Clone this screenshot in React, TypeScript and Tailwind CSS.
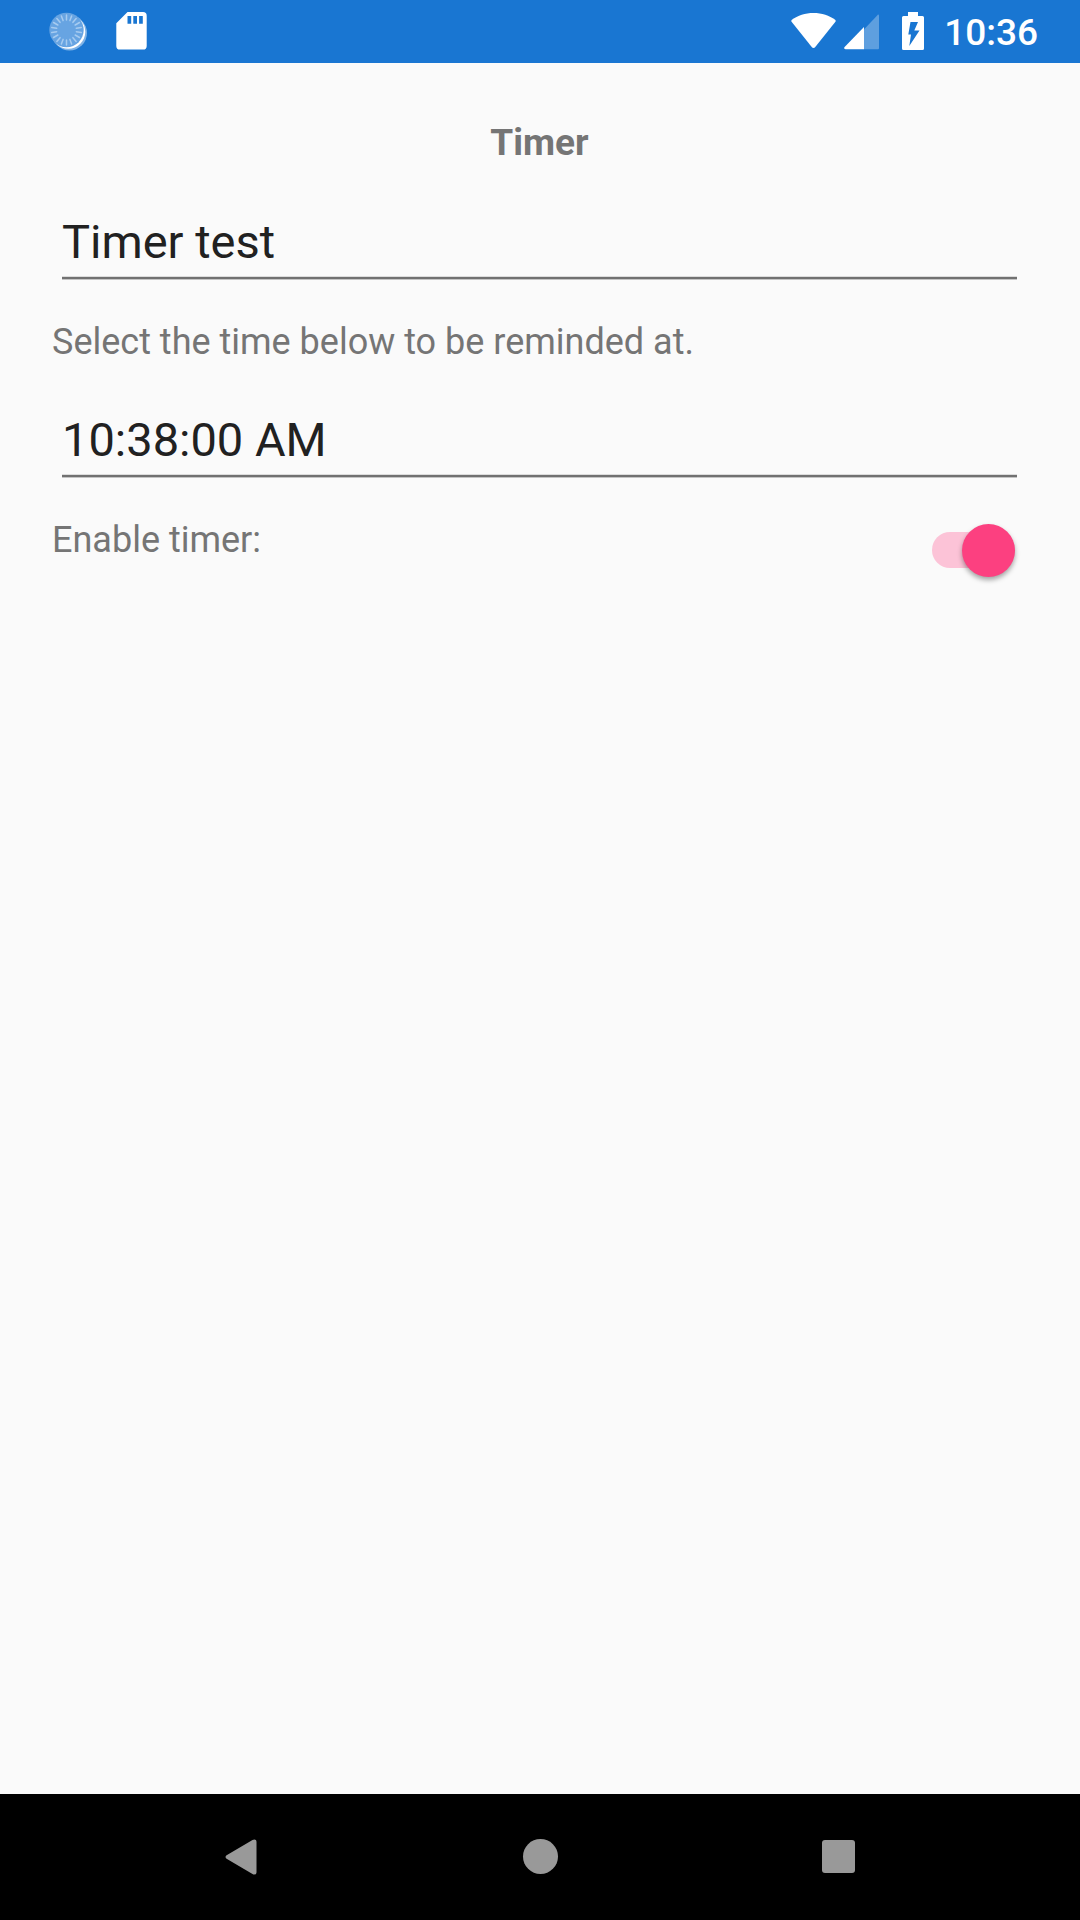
import { useState } from 'react';

const TICKS = Array.from({ length: 18 }, (_, i) => (i * 360) / 18);

function SyncIcon() {
  return (
    <svg className="h-10 w-10" viewBox="0 0 40 40" aria-hidden="true">
      <circle cx="21.5" cy="22" r="17.5" fill="#fff" opacity="0.45" />
      <circle cx="20.3" cy="20.8" r="17" fill="#fff" />
      <circle cx="18.5" cy="19" r="17.2" fill="#67a4e2" />
      <g stroke="#a6cbf0" strokeWidth="1.5" strokeLinecap="round">
        {TICKS.map((angle) => (
          <path key={angle} d="M18.5 4v5" transform={`rotate(${angle} 18.5 19)`} />
        ))}
      </g>
    </svg>
  );
}

function SdCardIcon() {
  return (
    <svg className="h-[38px] w-[31px]" viewBox="0 0 31 38" aria-hidden="true">
      <path
        fill="#fff"
        fillRule="evenodd"
        d="M11.5 0H27a3.7 3.7 0 0 1 3.7 3.7v30.2a3.7 3.7 0 0 1-3.7 3.7H4A3.7 3.7 0 0 1 .3 33.9V11.300zM11.500 4v7.700h3.700V4zM17.300 4v7.700h3.700V4zM23.100 4v7.700h3.700V4z"
      />
    </svg>
  );
}

function WifiIcon() {
  return (
    <svg className="h-9 w-[45px]" viewBox="0 0 46 37" preserveAspectRatio="none" aria-hidden="true">
      <path
        fill="#fff"
        d="M23 0C14.500 0 6.800 2.600.9 7c-.7.600-.8 1.400-.3 2.100L21.400 35.200c.8 1 2.400 1 3.200 0L45.400 9.100c.5-.7.4-1.500-.3-2.100C39.200 2.600 31.500 0 23 0z"
      />
    </svg>
  );
}

function SignalIcon() {
  return (
    <svg className="h-9 w-9" viewBox="0 0 36 36" aria-hidden="true">
      <path fill="#fff" opacity="0.3" d="M20 15.500 33.600.9c.6-.6 1.400-.2 1.400.600V34c0 .8-.5 1.300-1.300 1.300H20z" />
      <path fill="#fff" d="M20 13v22.300H1.500C.2 35.300-.3 34 .6 33z" />
    </svg>
  );
}

function BatteryIcon() {
  return (
    <svg className="h-[38px] w-[22px]" viewBox="0 0 22 38" aria-hidden="true">
      <path
        fill="#fff"
        fillRule="evenodd"
        d="M6 0h10v4h4.500A1.500 1.500 0 0 1 22 5.500v31a1.500 1.500 0 0 1-1.500 1.500h-19A1.500 1.500 0 0 1 0 36.500v-31A1.500 1.500 0 0 1 1.500 4H6zM8.500 10 6.300 22.500H9L7.300 34 17.500 18.500H12.300L16 10z"
      />
    </svg>
  );
}

function StatusBar() {
  return (
    <header className="flex h-[63px] items-center bg-[#1976d2] pr-[42px] pb-px pl-12 text-white">
      <SyncIcon />
      <div className="ml-7">
        <SdCardIcon />
      </div>
      <div className="ml-auto flex items-center">
        <WifiIcon />
        <div className="ml-2 pt-0.5">
          <SignalIcon />
        </div>
        <div className="ml-[22px]">
          <BatteryIcon />
        </div>
        <time className="ml-5 pt-1 text-[37px] leading-[44px] font-medium">10:36</time>
      </div>
    </header>
  );
}

const FIELD =
  'mx-2.5 h-[65px] border-b-2 border-[#717171] bg-transparent pb-[9px] text-[47px] leading-[54px] text-[#212121] shadow-[inset_0_-1px_0_#dcdcdc,0_1px_0_#c4c4c4] outline-none';

export default function App() {
  const [name, setName] = useState('Timer test');
  const [time, setTime] = useState('10:38:00 AM');
  const [enabled, setEnabled] = useState(true);

  return (
    <div className="flex min-h-screen flex-col bg-[#fafafa] font-[Roboto,sans-serif]">
      <StatusBar />
      <main className="flex flex-1 flex-col pt-[58px] pr-[53px] pl-[52px] text-[36px] leading-[44px] text-[#757575]">
        <h1 className="mb-[49px] text-center text-[37px] leading-[44px] font-bold">Timer</h1>
        <input
          type="text"
          aria-label="Timer name"
          className={FIELD}
          value={name}
          onChange={(e) => setName(e.target.value)}
        />
        <label htmlFor="time" className="mt-[41px] mb-12">
          Select the time below to be reminded at.
        </label>
        <input
          id="time"
          type="text"
          className={FIELD}
          value={time}
          onChange={(e) => setTime(e.target.value)}
        />
        <div className="mt-[41px] flex items-start justify-between">
          <label htmlFor="enabled">Enable timer:</label>
          <input
            id="enabled"
            type="checkbox"
            role="switch"
            checked={enabled}
            onChange={(e) => setEnabled(e.target.checked)}
            className="mt-[14px] mr-3 flex h-9 w-[83px] appearance-none items-center rounded-full bg-[#bdbdbd] before:size-[53px] before:shrink-0 before:rounded-full before:bg-[#f5f5f5] before:shadow-[0_3px_5px_rgba(0,0,0,0.35)] checked:justify-end checked:bg-[#fcc3d7] checked:before:bg-[#fc4080]"
          />
        </div>
      </main>
      <nav className="flex h-[126px] bg-black px-[92px] pb-px">
        <button type="button" aria-label="Back" className="flex flex-1 items-center justify-center">
          <svg className="h-9 w-8" viewBox="0 0 32 36" aria-hidden="true">
            <path
              fill="#999"
              d="M1.600 16.200 27.500.9C29.500-.2 31.500.500 31.500 2.800v30.400c0 2.300-2 3-4 1.900L1.600 19.800c-1.400-.9-1.400-2.700 0-3.600z"
            />
          </svg>
        </button>
        <button type="button" aria-label="Home" className="flex flex-1 items-center justify-center">
          <span className="size-[35px] rounded-full bg-[#999]" />
        </button>
        <button type="button" aria-label="Recent apps" className="flex flex-1 items-center justify-center">
          <span className="size-[33px] rounded-[3px] bg-[#999]" />
        </button>
      </nav>
    </div>
  );
}
